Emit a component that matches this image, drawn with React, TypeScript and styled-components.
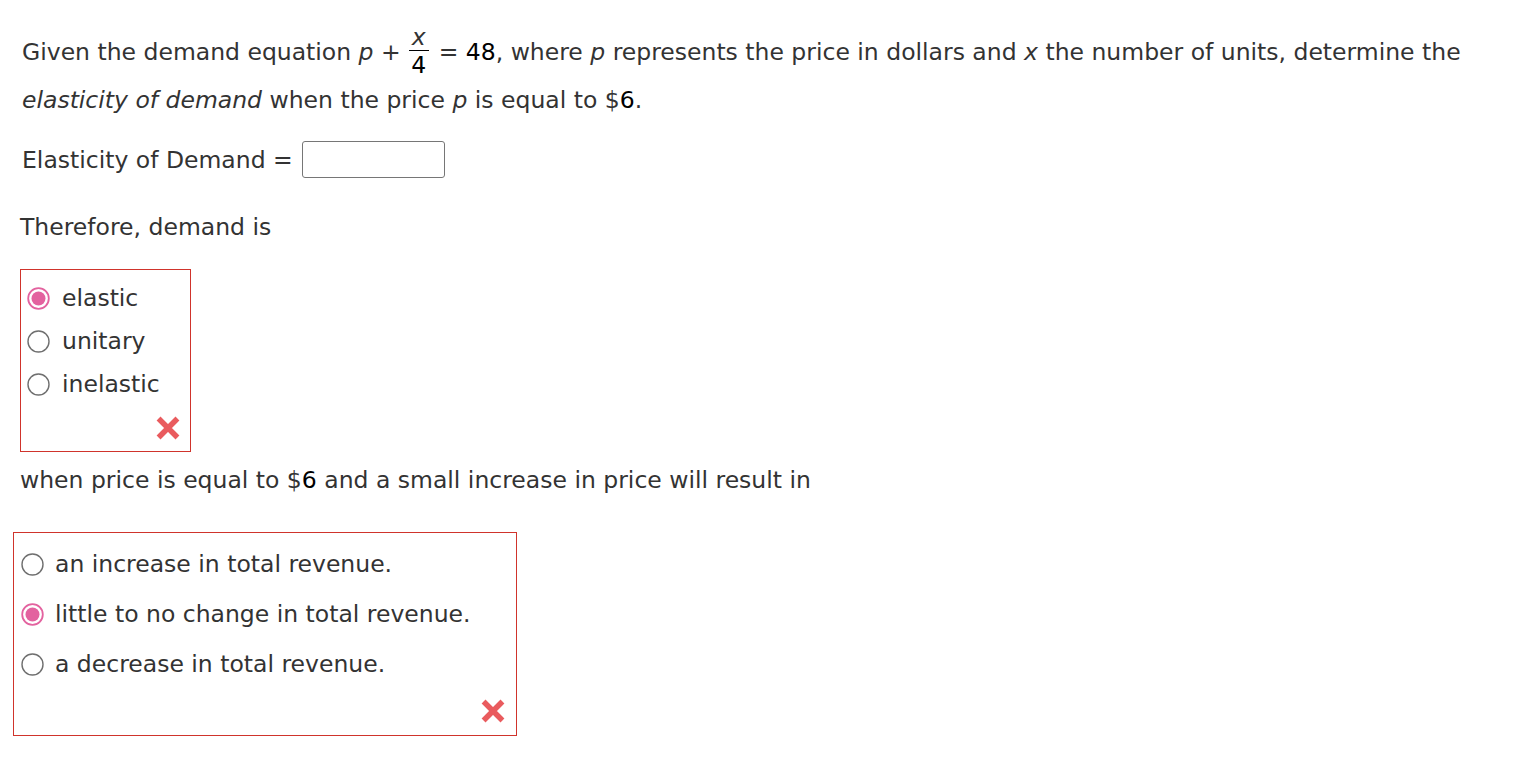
import React from "react";
import styled, { createGlobalStyle } from "styled-components";

const Global = createGlobalStyle`
  html, body { margin: 0; padding: 0; background: #fff; }
  body { font-family: "DejaVu Sans", Verdana, sans-serif; color: #333; }
`;

const Page = styled.div`
  display: flex;
  flex-direction: column;
  align-items: flex-start;
  padding: 28px 0 0 0;
  font-size: 23.5px;
`;

const Para = styled.p<{ $left?: number; $mt?: number }>`
  margin: ${(p) => p.$mt ?? 0}px 0 0 0;
  padding-left: ${(p) => p.$left ?? 22}px;
  line-height: 48px;
  width: 1510px;
  box-sizing: border-box;
`;

const M = styled.span`
  font-style: italic;
`;
const Num = styled.span`
  color: #000;
`;

const Frac = styled.span`
  display: inline-flex;
  flex-direction: column;
  align-items: center;
  vertical-align: middle;
  line-height: 23px;
  margin: -6px 10px -6px 8px;
  color: #000;
  position: relative;
  top: -2px;
`;
const FracTop = styled.span`
  font-style: italic;
  padding: 0 3px 1px;
  border-bottom: 1px solid #000;
  color: #333;
`;
const FracBot = styled.span`
  padding-top: 3px;
`;

const AnswerRow = styled.div`
  display: flex;
  align-items: center;
  gap: 9px;
  padding-left: 22px;
  margin-top: 17px;
`;

const Input = styled.input`
  width: 143px;
  height: 37px;
  box-sizing: border-box;
  border: 1px solid #767676;
  border-radius: 3px;
  padding: 0 6px;
  font: inherit;
`;

const Box = styled.div<{ $w: number; $h: number; $ml: number; $mt: number; $gap: number; $pt: number; $pl: number }>`
  box-sizing: border-box;
  width: ${(p) => p.$w}px;
  height: ${(p) => p.$h}px;
  margin-left: ${(p) => p.$ml}px;
  margin-top: ${(p) => p.$mt}px;
  border: 1px solid #d0342c;
  padding: ${(p) => p.$pt}px 0 0 ${(p) => p.$pl}px;
  display: flex;
  flex-direction: column;
  gap: ${(p) => p.$gap}px;
  position: relative;
`;

const Option = styled.label<{ $gap: number }>`
  display: flex;
  align-items: center;
  gap: ${(p) => p.$gap}px;
  height: 28px;
  line-height: 28px;
`;

const Cross = styled.div<{ $r: number; $b: number }>`
  position: absolute;
  right: ${(p) => p.$r}px;
  bottom: ${(p) => p.$b}px;
  width: 24px;
  height: 24px;
`;

function Radio({ checked }: { checked?: boolean }) {
  return (
    <svg width="23" height="23" viewBox="0 0 23 23">
      {checked ? (
        <>
          <circle cx="11.5" cy="11.5" r="10.3" fill="#fff" stroke="#e3629f" strokeWidth="1.8" />
          <circle cx="11.5" cy="11.5" r="7" fill="#e3629f" />
        </>
      ) : (
        <circle cx="11.5" cy="11.5" r="10.5" fill="#fff" stroke="#6f6f6f" strokeWidth="1.4" />
      )}
    </svg>
  );
}

function XMark() {
  return (
    <svg width="24" height="24" viewBox="0 0 24 24">
      <g style={{ filter: "blur(0.5px)" }}>
        <path d="M4.5 4.5 L19.5 19.5 M19.5 4.5 L4.5 19.5" stroke="#e95b5e" strokeWidth="5.5" strokeLinecap="square" />
      </g>
    </svg>
  );
}

export default function App() {
  return (
    <>
      <Global />
      <Page>
        <Para>
          Given the demand equation <M>p</M> +
          <Frac>
            <FracTop>x</FracTop>
            <FracBot>4</FracBot>
          </Frac>
          = <Num>48</Num>, where <M>p</M> represents the price in dollars and <M>x</M> the number of units, determine the
          <br />
          <M>elasticity of demand</M> when the price <M>p</M> is equal to $<Num>6</Num>.
        </Para>
        <AnswerRow>
          <span>Elasticity of Demand =</span>
          <Input type="text" />
        </AnswerRow>
        <Para $left={20} $mt={25}>Therefore, demand is</Para>
        <Box $w={171} $h={183} $ml={20} $mt={18} $gap={15} $pt={14} $pl={6}>
          <Option $gap={12}><Radio checked />elastic</Option>
          <Option $gap={12}><Radio />unitary</Option>
          <Option $gap={12}><Radio />inelastic</Option>
          <Cross $r={10} $b={11}><XMark /></Cross>
        </Box>
        <Para $left={20} $mt={4}>when price is equal to $<Num>6</Num> and a small increase in price will result in</Para>
        <Box $w={504} $h={204} $ml={13} $mt={28} $gap={22} $pt={17} $pl={7}>
          <Option $gap={11}><Radio />an increase in total revenue.</Option>
          <Option $gap={11}><Radio checked />little to no change in total revenue.</Option>
          <Option $gap={11}><Radio />a decrease in total revenue.</Option>
          <Cross $r={11} $b={12}><XMark /></Cross>
        </Box>
      </Page>
    </>
  );
}
